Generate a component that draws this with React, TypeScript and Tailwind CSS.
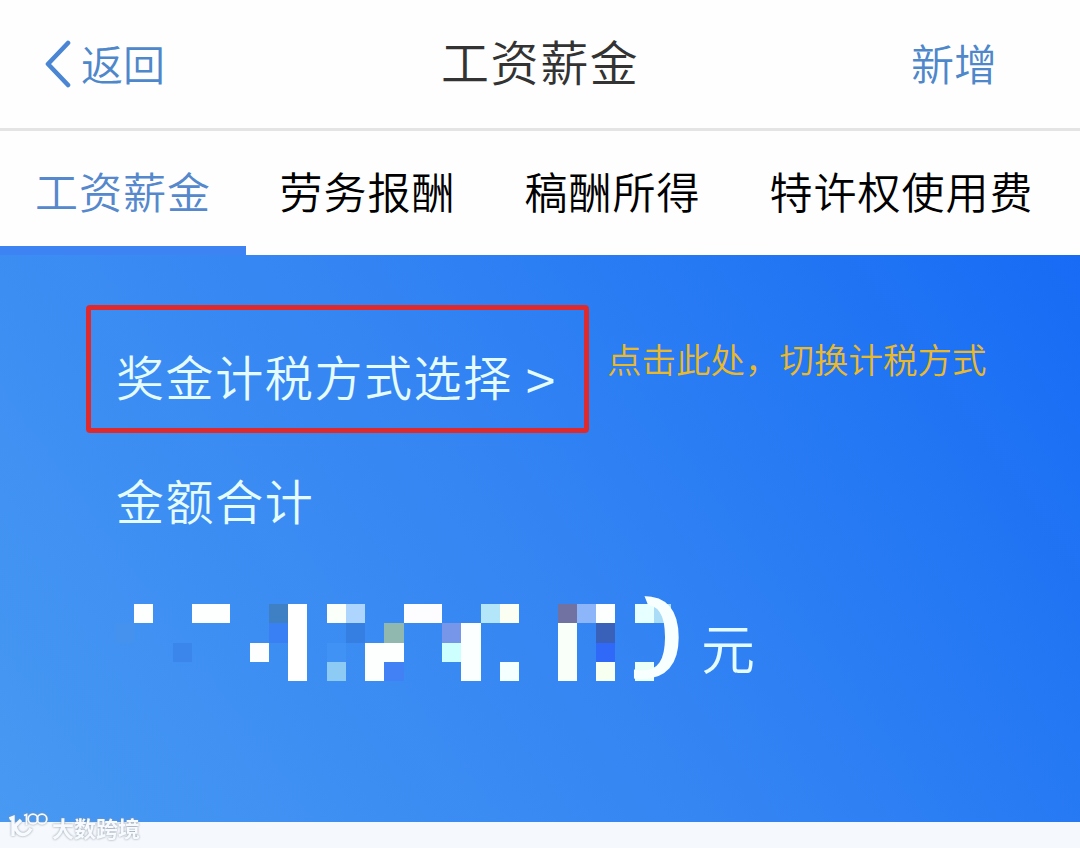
const tabs = ["工资薪金", "劳务报酬", "稿酬所得", "特许权使用费"];

// [column, row, width, height, color], one unit is one mosaic cell
const cells: [number, number, number, number, string][] = [
  [0, 0, 1, 1, "#fdffff"],
  [3, 0, 2, 1, "#fdffff"],
  [7, 0, 1, 1, "#3f80c4"],
  [8, 0, 1, 4, "#ffffff"],
  [10, 0, 1, 1, "#fbfff9"],
  [11, 0, 1, 1, "#add5fd"],
  [14, 0, 2, 1, "#fdfcff"],
  [18, 0, 1, 1, "#b3e6f8"],
  [19, 0, 1, 1, "#fbfff3"],
  [22, 0, 1, 1, "#7272a2"],
  [23, 0, 1, 1, "#8db5fa"],
  [24, 0, 1, 1, "#fdffff"],
  [26, 0, 1, 1, "#e6ffff"],
  [27, 0, 0.9, 1, "#a9dcf6"],
  [-1, 1, 1, 1, "#4492ee"],
  [7, 1, 1, 1, "#3a80f5"],
  [11, 1, 1, 1, "#357fe3"],
  [13, 1, 1, 1, "#91b8ae"],
  [16, 1, 1, 1, "#7796ea"],
  [17, 1, 1, 3, "#fbffff"],
  [22, 1, 1, 3, "#f9fff9"],
  [24, 1, 1, 1, "#3961ba"],
  [2, 2, 1, 1, "#3a86ea"],
  [6, 2, 1, 1, "#fdffff"],
  [10, 2, 1, 1, "#4192f5"],
  [12, 2, 2, 1, "#fdffff"],
  [16, 2, 1, 1, "#cdffff"],
  [24, 2, 1, 1, "#3069f7"],
  [10, 3, 1, 1, "#8dcbf5"],
  [12, 3, 1, 1, "#fdffff"],
  [13, 3, 1, 1, "#4280f5"],
  [19, 3, 1, 1, "#f4ffff"],
  [24, 3, 1, 1, "#f7fff0"],
  [26, 3, 1, 1, "#e9fff8"],
];

const Header = () => {
  return (
    <header className="flex h-[131px] items-center border-b-3 border-[#e4e4e4] pl-11">
      <button className="flex w-[397px] items-center text-[#4f87cb]">
        <svg width="28" height="48" viewBox="0 0 28 48" fill="none">
          <path
            d="M24 3 L4 24 L24 45"
            stroke="#4a86d3"
            strokeWidth="4.6"
            strokeLinecap="round"
            strokeLinejoin="round"
          />
        </svg>
        <span className="ml-[9px] whitespace-nowrap pb-[3px] text-[42px] leading-none">返回</span>
      </button>
      <h1 className="w-[470px] pb-[8px] text-[48px] leading-none tracking-[1.6px] text-[#333]">
        工资薪金
      </h1>
      <button className="whitespace-nowrap pb-[3px] text-[43px] leading-none text-[#4f87cb]">新增</button>
    </header>
  );
};

const Tabs = () => {
  return (
    <nav className="flex h-[124px]">
      {tabs.map((tab, i) => (
        <div
          key={tab}
          className={
            i === 0
              ? "flex w-[245.5px] shrink-0 items-center whitespace-nowrap border-b-9 border-[#3d83f3] pl-[35px] pt-[4px] text-[#5588cc]"
              : "flex w-[245px] shrink-0 items-center whitespace-nowrap pb-[5px] pl-[34px] text-black"
          }
        >
          <span className="text-[43px] leading-none tracking-[1px]">{tab}</span>
        </div>
      ))}
    </nav>
  );
};

const Amount = () => {
  return (
    <div className="mt-[70px] flex items-start">
      <div className="relative h-[90px] w-[570px]">
        <svg width="570" height="90" viewBox="0 0 570 90" overflow="visible" shapeRendering="crispEdges">
          {cells.map(([x, y, w, h, color]) => (
            <rect
              key={`${x}-${y}`}
              x={18 + x * 19.25}
              y={11 + y * 19.25}
              width={w * 19.25}
              height={h * 19.25}
              fill={color}
            />
          ))}
        </svg>
        {/* last digit, half covered by the mosaic */}
        <span className="absolute left-[502px] top-[-14px] origin-[60px_50%] scale-x-130 font-['Liberation_Sans',sans-serif] text-[117px] font-normal leading-none text-[#f8ffff] [clip-path:polygon(29px_0,100%_0,100%_100%,26px_100%,26px_88px,38px_80px,40px_70px,40px_36px)]">
          0
        </span>
      </div>
      <span className="ml-[15px] mt-[27px] text-[54px] leading-none text-[#e4fcff]">元</span>
    </div>
  );
};

const Watermark = () => {
  return (
    <div className="absolute bottom-[9px] left-[9px] flex items-end gap-[4px] text-[#f7fbff] [filter:drop-shadow(0_0_1px_#8b97a5)]">
      <svg width="39" height="28" viewBox="0 0 39 28" fill="none" stroke="currentColor">
        <path d="M0.5 8 L4 6.5 V25 M12 9 L6 15 Q8 23.5 14 23.5 Q19 23.5 22 17.5" strokeWidth="3.4" />
        <path d="M15 4.5 L17.5 3.5 V14" strokeWidth="1.8" />
        <circle cx="24" cy="8" r="4.8" strokeWidth="1.8" />
        <circle cx="33" cy="8" r="4.8" strokeWidth="1.8" />
      </svg>
      <span className="mb-[-3px] text-[22px] font-bold leading-[30px]">大数跨境</span>
    </div>
  );
};

const App = () => {
  return (
    <div className="relative h-[848px] w-[1080px] overflow-hidden bg-[#f5f8fc] font-['Noto_Sans_CJK_SC',sans-serif] font-[350]">
      <div className="bg-[#fefefe]">
        <Header />
        <Tabs />
      </div>
      <main className="h-[567px] bg-[linear-gradient(54deg,#4799f2_0%,#3484f3_50%,#2478f3_76%,#176bf5_100%)] pt-[50px]">
        <div className="flex items-start pl-[86px]">
          <div className="flex h-[128px] w-[503px] items-center rounded-[4px] border-5 border-[#df2a2d] pl-[25px] pt-[12px] text-[#e4fcff]">
            <span className="whitespace-nowrap text-[48px] leading-none tracking-[1.6px]">奖金计税方式选择</span>
            <span className="ml-[13px] pt-[5px] text-[54px] leading-none">&gt;</span>
          </div>
          <p className="ml-[18px] mt-[36px] whitespace-nowrap text-[34.5px] leading-none text-[#eab92b]">
            点击此处，切换计税方式
          </p>
        </div>
        <div className="pl-[116px]">
          <p className="mt-[42px] text-[48px] leading-none tracking-[1.6px] text-[#e4fcff]">金额合计</p>
          <Amount />
        </div>
      </main>
      <Watermark />
    </div>
  );
};

export default App;
